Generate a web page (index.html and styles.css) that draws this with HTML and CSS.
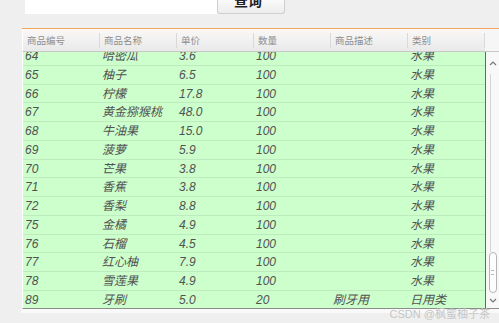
FILE: index.html
```html
<!DOCTYPE html>
<html lang="zh">
<head>
<meta charset="utf-8">
<link rel="stylesheet" href="styles.css">
</head>
<body>
<div class="page">
  <div class="top">
    <div class="panel"></div>
    <div class="btn"><span>查询</span></div>
  </div>
  <div class="table">
    <div class="head">
      <div class="hc">商品编号</div>
      <div class="hc">商品名称</div>
      <div class="hc">单价</div>
      <div class="hc">数量</div>
      <div class="hc">商品描述</div>
      <div class="hc">类别</div>
      <div class="hfill"></div>
    </div>
    <div class="body">
      <div class="rows">
        <div class="rows-inner">
          <div class="row"><div class="c">64</div><div class="c">哈密瓜</div><div class="c">3.6</div><div class="c">100</div><div class="c"></div><div class="c">水果</div></div>
          <div class="row"><div class="c">65</div><div class="c">柚子</div><div class="c">6.5</div><div class="c">100</div><div class="c"></div><div class="c">水果</div></div>
          <div class="row"><div class="c">66</div><div class="c">柠檬</div><div class="c">17.8</div><div class="c">100</div><div class="c"></div><div class="c">水果</div></div>
          <div class="row"><div class="c">67</div><div class="c">黄金猕猴桃</div><div class="c">48.0</div><div class="c">100</div><div class="c"></div><div class="c">水果</div></div>
          <div class="row"><div class="c">68</div><div class="c">牛油果</div><div class="c">15.0</div><div class="c">100</div><div class="c"></div><div class="c">水果</div></div>
          <div class="row"><div class="c">69</div><div class="c">菠萝</div><div class="c">5.9</div><div class="c">100</div><div class="c"></div><div class="c">水果</div></div>
          <div class="row"><div class="c">70</div><div class="c">芒果</div><div class="c">3.8</div><div class="c">100</div><div class="c"></div><div class="c">水果</div></div>
          <div class="row"><div class="c">71</div><div class="c">香蕉</div><div class="c">3.8</div><div class="c">100</div><div class="c"></div><div class="c">水果</div></div>
          <div class="row"><div class="c">72</div><div class="c">香梨</div><div class="c">8.8</div><div class="c">100</div><div class="c"></div><div class="c">水果</div></div>
          <div class="row"><div class="c">75</div><div class="c">金橘</div><div class="c">4.9</div><div class="c">100</div><div class="c"></div><div class="c">水果</div></div>
          <div class="row"><div class="c">76</div><div class="c">石榴</div><div class="c">4.5</div><div class="c">100</div><div class="c"></div><div class="c">水果</div></div>
          <div class="row"><div class="c">77</div><div class="c">红心柚</div><div class="c">7.9</div><div class="c">100</div><div class="c"></div><div class="c">水果</div></div>
          <div class="row"><div class="c">78</div><div class="c">雪莲果</div><div class="c">4.9</div><div class="c">100</div><div class="c"></div><div class="c">水果</div></div>
          <div class="row"><div class="c">89</div><div class="c">牙刷</div><div class="c">5.0</div><div class="c">20</div><div class="c">刷牙用</div><div class="c">日用类</div></div>
        </div>
      </div>
      <div class="sb">
        <div class="sb-up"><svg width="8" height="6" viewBox="0 0 8 6"><polyline points="1,5 4,2 7,5" fill="none" stroke="#777" stroke-width="1.2"/></svg></div>
        <div class="sb-track"></div>
        <div class="sb-thumb"><div class="grip"></div></div>
        <div class="sb-down"><svg width="8" height="6" viewBox="0 0 8 6"><polyline points="1,1 4,4 7,1" fill="none" stroke="#777" stroke-width="1.2"/></svg></div>
      </div>
    </div>
    <div class="foot"></div>
  </div>
  <div class="wm">CSDN @枫蜜柚子茶</div>
</div>
</body>
</html>
```

FILE: styles.css
```css
html, body {
  margin: 0;
  padding: 0;
}
body {
  background: #efefef;
  width: 499px;
  height: 323px;
  overflow: hidden;
  font-family: "Liberation Sans", "Noto Sans CJK SC", sans-serif;
}
.page {
  position: relative;
  height: 323px;
}
.top {
  display: flex;
  height: 14px;
  padding-left: 25px;
}
.panel {
  width: 192px;
  background: #ffffff;
}
.btn {
  box-sizing: border-box;
  width: 68px;
  border: 1px solid #cfcfcf;
  border-top: none;
  border-radius: 0 0 3px 3px;
  background: linear-gradient(#fafafa, #ededed);
  overflow: hidden;
  display: flex;
  justify-content: center;
  padding-right: 6px;
}
.btn span {
  display: block;
  font-family: "Noto Sans CJK SC", sans-serif;
  font-weight: bold;
  font-size: 14px;
  line-height: 14px;
  margin-top: -7px;
  color: #1f1f1f;
}
.table {
  margin-top: 14px;
  margin-left: 22px;
  border-top: 1px solid #f2a65e;
}
.head {
  display: flex;
  height: 22px;
  border-bottom: 1px solid #c8c8c8;
  border-left: 1px solid #ffffff;
  background: linear-gradient(#fbf7f3, #f3f3f3 40%, #e9e9e9);
}
.hc {
  position: relative;
  width: 77px;
  box-sizing: border-box;
  padding-left: 4px;
  font-family: "Noto Sans CJK SC", sans-serif;
  font-size: 9.5px;
  line-height: 22px;
  color: #8e8e8e;
}
.hc::after {
  content: "";
  position: absolute;
  right: 0;
  top: 4px;
  bottom: 3px;
  width: 1px;
  background: #d9d9d9;
}
.hfill {
  flex: 1;
  background: #f6f6f6;
}
.body {
  display: flex;
  height: 256px;
  border-bottom: 1px solid #8c8c8c;
  border-left: 1px solid #ffffff;
}
.rows {
  width: 462px;
  overflow: hidden;
  background: #ccffcc;
}
.rows-inner {
  margin-top: -5px;
}
.row {
  display: flex;
  height: 18.75px;
  box-sizing: border-box;
  border-bottom: 1px solid #bdebbd;
}
.c {
  width: 77px;
  box-sizing: border-box;
  padding-left: 2px;
  font-style: italic;
  font-size: 12px;
  line-height: 18px;
  color: #525252;
  white-space: nowrap;
}
.sb {
  flex: 1;
  border-left: 1px solid #666666;
  background: #f8f8f8;
  display: flex;
  flex-direction: column;
  align-items: center;
}
.sb-up {
  height: 22px;
  display: flex;
  align-items: center;
  justify-content: center;
}
.sb-track {
  flex: 1;
  width: 1px;
  background: #d4d4d4;
  margin-left: -4px;
}
.sb-thumb {
  width: 8px;
  height: 41px;
  box-sizing: border-box;
  border: 1px solid #b5b5b5;
  border-radius: 4px;
  background: #fdfdfd;
  display: flex;
  align-items: center;
  justify-content: center;
}
.grip {
  width: 3px;
  height: 5px;
  border-top: 1px solid #bbb;
  border-bottom: 1px solid #bbb;
  box-sizing: border-box;
}
.sb-down {
  height: 15px;
  display: flex;
  align-items: center;
  justify-content: center;
}
.foot {
  height: 4px;
  background: #f9f9f9;
  margin-left: -1px;
}
.wm {
  position: absolute;
  right: 9px;
  top: 305px;
  font-family: "Liberation Sans", "Noto Sans CJK SC", sans-serif;
  font-size: 11px;
  color: #c6c6c6;
}
```
